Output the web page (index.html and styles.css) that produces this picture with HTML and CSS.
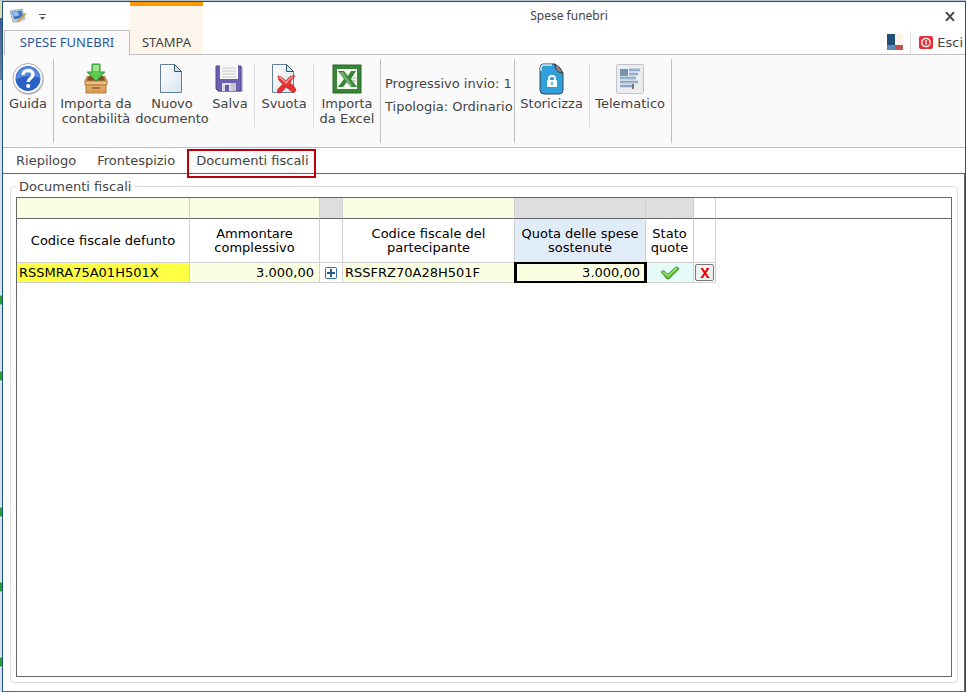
FILE: index.html
```html
<!DOCTYPE html>
<html lang="it">
<head>
<meta charset="utf-8">
<title>Spese funebri</title>
<link rel="stylesheet" href="styles.css">
</head>
<body>
<div class="window">
  <header class="header">
    <div class="lead">
      <div class="quick">
        <svg width="18" height="16" viewBox="0 0 18 16" aria-hidden="true"><path d="M1 3l12-2 3 10-12 3z" fill="#c9d0d8" stroke="#a9b2bc"/><path d="M2.500 4l10-1.500 2 7-9 2z" fill="#3f74c0"/><path d="M3 4.500l6-1 1 4-5 1z" fill="#8fc0ee"/><path d="M5 14l7-2 3 1-8 2z" fill="#c4c8cc"/><path d="M8 13l8-8 1 1-8 8z" fill="#f0a92c" stroke="#ca7d22" stroke-width=".5"/></svg>
        <button class="more" aria-label="Personalizza"><svg width="7" height="6" viewBox="0 0 7 6"><path d="M0 .5h7" stroke="#555"/><path d="M1 3h5L3.500 6z" fill="#555"/></svg></button>
      </div>
      <button class="main-tab active">SPESE FUNEBRI</button>
    </div>
    <button class="main-tab accent">STAMPA</button>
    <div class="rest">
      <div class="title-row">
        <h1 class="title">Spese funebri</h1>
        <button class="close" aria-label="Chiudi"><svg width="10" height="9" viewBox="0 0 10 9"><path d="M1 0l8 9M9 0L1 9" stroke="#4c4c4c" stroke-width="2"/></svg></button>
      </div>
      <div class="tools">
        <button class="swatch" aria-label="Tema"><svg width="16" height="16" viewBox="0 0 16 16"><path d="M0 0h8v11H0z" fill="#1f4e79"/><path d="M8 0h8v11H8z" fill="#fcf2ea"/><path d="M0 11h8v5H0z" fill="#5b87b9"/><path d="M8 11h8v5H8z" fill="#c0504d"/></svg></button>
        <button class="exit"><svg width="14" height="13" viewBox="0 0 14 13"><rect width="14" height="13" rx="2" fill="#e8303a"/><circle cx="7" cy="6.500" r="4.200" fill="none" stroke="#fff" stroke-width="1.200"/><path d="M7 4v5" stroke="#fff" stroke-width="1.300"/></svg>Esci</button>
      </div>
    </div>
  </header>

  <div class="ribbon">
    <div class="group">
      <button class="cmd guide">
        <svg width="32" height="32" viewBox="0 0 32 32"><circle cx="16.500" cy="16.500" r="15.200" fill="#b3b7bb"/><circle cx="16" cy="15.500" r="15" fill="#fff" stroke="#a9aeb4"/><circle cx="16" cy="15.500" r="12.500" fill="#2860c6"/><path d="M4 16a12 12 0 0 1 24-1c-7-3-17-2-24 1z" fill="#5488dd"/><path d="M11 12c0-6 10-6 10-.5 0 4-4.800 3.500-4.800 7.500" fill="none" stroke="#fff" stroke-width="3.400"/><circle cx="16.200" cy="23" r="2.100" fill="#fff"/></svg>
        <span>Guida</span></button>
    </div>
    <div class="group documents">
      <button class="cmd wide">
        <svg width="32" height="32" viewBox="0 0 32 32"><path d="M8 13h16l3 6H5z" fill="#79502b"/><path d="M5 18h22v4H5z" fill="#e9bd80" stroke="#bd8546"/><path d="M6 22h20v8H6z" fill="#dfa763" stroke="#b47a3c"/><path d="M7 28h18" stroke="#c99254"/><path d="M8 13l-3 6M24 13l3 6" stroke="#c58e50" stroke-width="2"/><rect x="12" y="24" width="8" height="2" rx="1" fill="#a26c35"/><path d="M12 1h8v8h5l-9 9-9-9h5z" fill="#5cc94f" stroke="#35953a"/><path d="M13 2h6v6h-6z" fill="#a0e48f"/></svg>
        <span>Importa da contabilità</span></button>
      <button class="cmd wide">
        <svg width="32" height="32" viewBox="0 0 32 32"><defs><linearGradient id="paper" x2="1" y2="1"><stop stop-color="#fff"/><stop offset="1" stop-color="#d7e5ef"/></linearGradient></defs><path d="M4.500 1.500h14l7 7v21h-21z" fill="url(#paper)" stroke="#62809b"/><path d="M18.500 1.500v7h7z" fill="#d4e4ef" stroke="#38536b"/></svg>
        <span>Nuovo documento</span></button>
      <button class="cmd narrow">
        <svg width="32" height="32" viewBox="0 0 32 32"><path d="M3 4h26v25H5z" fill="#c6c3ce"/><path d="M2 3h25v25H4l-2-2z" fill="#6f5fb0" stroke="#51438e"/><path d="M6 2h18v14H6z" fill="#f7f7f7"/><path d="M8 5h14M8 8h14M8 11h14M8 14h14" stroke="#c8c8c8"/><path d="M8 20h14v8H8z" fill="#dcdde4"/><path d="M11 22h4v6h-4z" fill="#6959ab"/><path d="M17 20h5v8h-5z" fill="#c2c4cf"/></svg>
        <span>Salva</span></button>
    </div>
    <div class="group">
      <button class="cmd medium soft">
        <svg width="32" height="32" viewBox="0 0 32 32"><path d="M4.500 1.500h14l7 7v21h-21z" fill="url(#paper)" stroke="#62809b"/><path d="M18.500 1.500v7h7z" fill="#d4e4ef" stroke="#38536b"/><path d="M10 13c3 0 6 3 8 5 2-3 5-6 9-5-2 2-4 4-5 7 3 2 5 4 6 7-1 3-3 3-5 1l-5-4c-2 3-4 5-6 6-3 0-3-2-2-4l5-5c-3-2-5-4-5-8z" fill="#e23131" stroke="#b71c1c" stroke-width=".6"/><path d="M11 14c3 1 5 4 7 6 2-3 4-5 7-6" fill="none" stroke="#f89a92" stroke-width="1.500"/></svg>
        <span>Svuota</span></button>
      <button class="cmd excel soft">
        <svg width="32" height="32" viewBox="0 0 32 32"><rect x="2" y="2" width="28" height="28" fill="#388538" stroke="#27692a"/><rect x="6" y="6" width="20" height="20" fill="#f5faf3"/><path d="M7 8h6l4 5 3-5h5l-5 8 6 8h-6l-4-5-4 5H7l6-8z" fill="#388538"/><path d="M8 9h4l10 14h-3z" fill="#71ad68"/><path d="M21 18h4M22 15h3" stroke="#85b87e"/></svg>
        <span>Importa da&nbsp;Excel</span></button>
    </div>
    <div class="group info"><p>Progressivo invio: 1</p><p>Tipologia: Ordinario</p></div>
    <div class="group">
      <button class="cmd store">
        <svg width="32" height="32" viewBox="0 0 32 32"><path d="M7 1h12l8 9v17q0 4-4 4H8q-4 0-4-4V5q0-4 3-4z" fill="#319fd9" stroke="#37444e"/><path d="M19 1c0 5 2 9 8 9l-3-5z" fill="#888" stroke="#333"/><path d="M5 8V5q0-3 3-3h8" fill="none" stroke="#d2ebf7" stroke-width="1.400"/><rect x="11" y="17" width="10" height="7" rx="1" fill="#fff"/><path d="M13 17v-2q0-2 3-2t3 2v2" fill="none" stroke="#fff" stroke-width="1.800"/><path d="M16 19v3" stroke="#319fd9" stroke-width="1.500"/></svg>
        <span>Storicizza</span></button>
      <button class="cmd telematic soft">
        <svg width="32" height="32" viewBox="0 0 32 32"><rect x="2.500" y="1.500" width="27" height="29" rx="1" fill="#ebedef" stroke="#c1c3c6"/><path d="M6 6h8v7H6z" fill="#7893b0"/><path d="M15 7h11M15 11h9M6 15h16M6 19h18M6 23h13" stroke="#86a7cb" stroke-width="2.400"/><path d="M17 6h8M16 12h7M7 16h15M7 20h16" stroke="#b3c9df"/><path d="M19 21v5" stroke="#777" stroke-width="2"/></svg>
        <span>Telematico</span></button>
    </div>
  </div>

  <nav class="pages">
    <a href="#riepilogo">Riepilogo</a>
    <a href="#frontespizio">Frontespizio</a>
    <a href="#documenti" class="current">Documenti fiscali</a>
  </nav>

  <main class="page" id="documenti">
    <fieldset class="frame">
      <legend>Documenti fiscali</legend>
      <div class="grid">
        <table>
          <colgroup><col class="c-code"><col class="c-total"><col class="c-add"><col class="c-part"><col class="c-quota"><col class="c-state"><col class="c-del"><col></colgroup>
          <thead>
            <tr class="filters">
              <td class="entry"><input aria-label="Filtra codice fiscale defunto"></td>
              <td class="entry"><input aria-label="Filtra ammontare complessivo"></td>
              <td class="off"></td>
              <td class="entry"><input aria-label="Filtra codice fiscale del partecipante"></td>
              <td class="off"></td><td class="off"></td><td></td><td></td>
            </tr>
            <tr class="heads">
              <th>Codice fiscale defunto</th><th>Ammontare complessivo</th><th></th><th>Codice fiscale del partecipante</th><th class="selected">Quota delle spese sostenute</th><th>Stato quote</th><th></th><th></th>
            </tr>
          </thead>
          <tbody>
            <tr class="record">
              <td class="key">RSSMRA75A01H501X</td>
              <td class="entry amount">3.000,00</td>
              <td class="icon-cell"><button class="add" aria-label="Aggiungi"><svg width="12" height="12" viewBox="0 0 12 12"><rect x=".5" y=".5" width="11" height="11" rx="1" fill="#fff" stroke="#37699a"/><path d="M2 6h8M6 2v8" stroke="#245c94" stroke-width="2"/></svg></button></td>
              <td class="entry">RSSFRZ70A28H501F</td>
              <td class="entry focus"><input aria-label="Quota delle spese sostenute" value="3.000,00"></td>
              <td class="icon-cell ok"><svg width="20" height="14" viewBox="0 0 20 14" role="img" aria-label="Corretto"><path d="M1 6q3-3 5 1l2 1 8-7q3 0 3 2L9 13H7z" fill="#59b934" stroke="#348d27" stroke-width=".7"/><path d="M3 6l5 4 9-8" fill="none" stroke="#a5e47d" stroke-width="1.300"/></svg></td>
              <td class="icon-cell"><button class="delete" aria-label="Elimina"><svg width="10" height="10" viewBox="0 0 10 10"><path d="M1 .5h2M6.500 .5h2.500M.5 9.500H3M7 9.500h2.500" stroke="#e80000"/><path d="M2 .5l6 9M8 .5l-6 9" stroke="#e80000" stroke-width="2"/></svg></button></td>
              <td class="blank"></td>
            </tr>
          </tbody>
        </table>
      </div>
    </fieldset>
  </main>
</div>
</body>
</html>
```
FILE: styles.css
```css
* { box-sizing: border-box; }
body {
  margin: 0;
  min-height: 100vh;
  display: flex;
  padding: 1px 0 0 2px;
  background:
    radial-gradient(circle at 0 300px, #24a024 4px, transparent 5px),
    radial-gradient(circle at 0 376px, #24a024 4px, transparent 5px),
    radial-gradient(circle at 0 512px, #24a024 4px, transparent 5px),
    radial-gradient(circle at 0 587px, #24a024 4px, transparent 5px),
    radial-gradient(circle at 0 662px, #24a024 4px, transparent 5px),
    linear-gradient(#b4c3cf 1px, #d8deaa 1px, #d8deaa 18px, #3e5d91 18px, #70859d 80px, #d5e0ea 80px);
  color: #444;
  font: 13px/15px "DejaVu Sans", sans-serif;
}
button { margin: 0; padding: 0; border: 0; background: none; color: inherit; font: inherit; }
svg { display: block; flex: none; }
a { color: inherit; text-decoration: none; }
.window {
  flex: 1;
  min-width: 0;
  display: flex;
  flex-direction: column;
  background: #fff;
  border: 1px solid #1d4f8b;
  border-bottom: 0;
}

/* title bar and ribbon tabs */
.header { display: flex; height: 53px; }
.lead { display: flex; flex-direction: column; margin-left: 1px; width: 126px; }
.quick { display: flex; align-items: center; height: 28px; gap: 12px; padding-left: 5px; }
.more { padding: 2px 0 0; }
.main-tab { font: 13px/16px "Noto Sans", sans-serif; }
.active {
  position: relative;
  height: 25px;
  padding-bottom: 2px;
  border: 1px solid #bfbfbf;
  border-bottom: 0;
  background: #fafafa;
  color: #2b579a;
  z-index: 1;
}
.accent { width: 73px; padding-top: 24px; border-top: 4px solid #f90; background: #fef5ed; border-bottom: 1px solid #bfbfbf; }
.rest { flex: 1; border-bottom: 1px solid #bfbfbf; }
.title-row { display: flex; align-items: center; height: 28px; }
.title { flex: 1; margin: 0; text-align: center; font: 12px/16px "Noto Sans", sans-serif; }
.close { width: 30px; display: flex; justify-content: center; }
.tools { display: flex; justify-content: flex-end; align-items: center; height: 24px; gap: 7px; padding-right: 2px; }
.exit { display: flex; align-items: center; gap: 4px; height: 22px; padding-left: 8px; border-left: 1px solid #ddd; }

/* ribbon commands */
.ribbon { display: flex; height: 93px; padding: 4px 0; background: #fafafa; border-bottom: 1px solid #bfbfbf; }
.group { display: flex; align-items: flex-start; padding-top: 4px; border-right: 1px solid #bfbfbf; }
.cmd { display: flex; flex-direction: column; align-items: center; gap: 1px; height: 64px; }
.guide { width: 50px; }
.documents { padding-left: 4px; border-right: 0; }
.wide { width: 76px; }
.narrow { width: 44px; padding-right: 4px; }
.medium { width: 59px; }
.excel { width: 67px; }
.store { width: 74px; }
.telematic { width: 82px; }
.soft { border-left: 1px solid #ddd; }
.info { flex-direction: column; gap: 8px; padding: 17px 1px 0 4px; }
.info p { margin: 0; white-space: nowrap; }

/* page tabs */
.pages { display: flex; gap: 5px; height: 26px; padding-left: 5px; border-bottom: 1px solid #666; }
.pages a { padding: 5px 8px; white-space: nowrap; }
.pages .current { position: relative; background: #fafafa; }
.current::after { content: ""; position: absolute; inset: 1px 1px -5px -1px; border: 2px solid #b8000c; }

.page {
  flex: 1;
  display: flex;
  padding: 4px 6px 8px 7px;
  border-right: 1px solid #666;
  border-bottom: 1px solid #666;
}
.frame { flex: 1; display: flex; min-width: 0; margin: 0; padding: 2px 5px 5px; border: 1px solid #ddd; border-radius: 4px; }
.frame legend { padding: 0 3px; line-height: 17px; }
.grid { flex: 1; min-width: 0; border: 1px solid #666; background: #fff; }
table { width: 100%; table-layout: fixed; border-collapse: separate; border-spacing: 0; color: #000; }
td, th { padding: 0; border-right: 1px solid #d0d0d0; border-bottom: 1px solid #d0d0d0; font-weight: normal; }
td:last-child, th:last-child { border-right: 0; }
th:last-child, .blank { border-bottom: 0; }
.c-code { width: 173px; }
.c-total { width: 130px; }
.c-add { width: 23px; }
.c-part { width: 172px; }
.c-quota { width: 131px; }
.c-state { width: 48px; }
.c-del { width: 22px; }
.filters td { height: 21px; border-bottom-color: #666; }
.heads th { height: 44px; line-height: 14px; }
.record td { height: 20px; padding-left: 2px; }
.entry { background: #fbffe1; }
.filters .off { background: #dedede; }
.heads .selected { background: #e1ecf9; }
.record .key { background: #ff4; }
.record .amount { padding-right: 5px; text-align: right; }
input { display: block; width: 100%; height: 18px; padding: 0; border: 0; outline: 0; background: none; font: inherit; }
.record .focus { padding: 0; position: relative; }
.focus input { height: 19px; padding-right: 5px; text-align: right; }
.focus::after { content: ""; position: absolute; inset: -1px -2px -1px -1px; border: solid #000; border-width: 2px 3px; pointer-events: none; }
.record .icon-cell { padding: 0; }
.icon-cell svg { margin: auto; }
.add { display: block; margin: auto; }
.ok { background: #e5fcf8; }
.delete { display: block; width: 19px; height: 17px; margin: auto; border: 1px solid #777; border-radius: 2px; background: #f1f1f1; }
```
